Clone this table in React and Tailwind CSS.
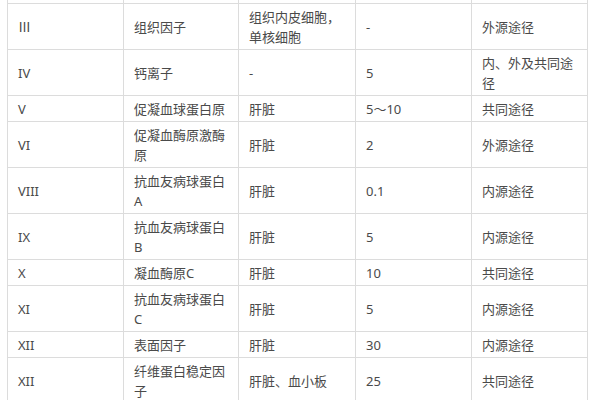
import React from "react";

const rows = [
  ["\u00a0", "\u00a0", "\u00a0", "\u00a0", "\u00a0"],
  ["Ⅲ", "组织因子", "组织内皮细胞，单核细胞", "-", "外源途径"],
  ["IV", "钙离子", "-", "5", "内、外及共同途径"],
  ["V", "促凝血球蛋白原", "肝脏", "5～10", "共同途径"],
  ["VI", "促凝血酶原激酶原", "肝脏", "2", "外源途径"],
  ["VIII", "抗血友病球蛋白A", "肝脏", "0.1", "内源途径"],
  ["IX", "抗血友病球蛋白B", "肝脏", "5", "内源途径"],
  ["X", "凝血酶原C", "肝脏", "10", "共同途径"],
  ["XI", "抗血友病球蛋白C", "肝脏", "5", "内源途径"],
  ["XII", "表面因子", "肝脏", "30", "内源途径"],
  ["XII", "纤维蛋白稳定因子", "肝脏、血小板", "25", "共同途径"],
];

export default function App() {
  return (
    <div
      className="w-[600px] h-[400px] overflow-hidden bg-white"
      style={{ fontFamily: '"Noto Sans", "Noto Sans CJK SC", sans-serif' }}
    >
      <table className="ml-[7px] -mt-[23px] w-[580px] table-fixed border-collapse text-[13px] leading-[20px] text-[#4a4a4a]">
        <colgroup>
          <col className="w-[116px]" />
          <col className="w-[115px]" />
          <col className="w-[117px]" />
          <col className="w-[116px]" />
          <col className="w-[116px]" />
        </colgroup>
        <tbody>
          {rows.map((r, i) => (
            <tr key={i}>
              {r.map((c, j) => (
                <td
                  key={j}
                  className="border border-[#dcdcdc] pl-[10px] pr-[8px] pt-[3px] pb-[2px] align-middle break-all"
                >
                  {c}
                </td>
              ))}
            </tr>
          ))}
        </tbody>
      </table>
    </div>
  );
}
